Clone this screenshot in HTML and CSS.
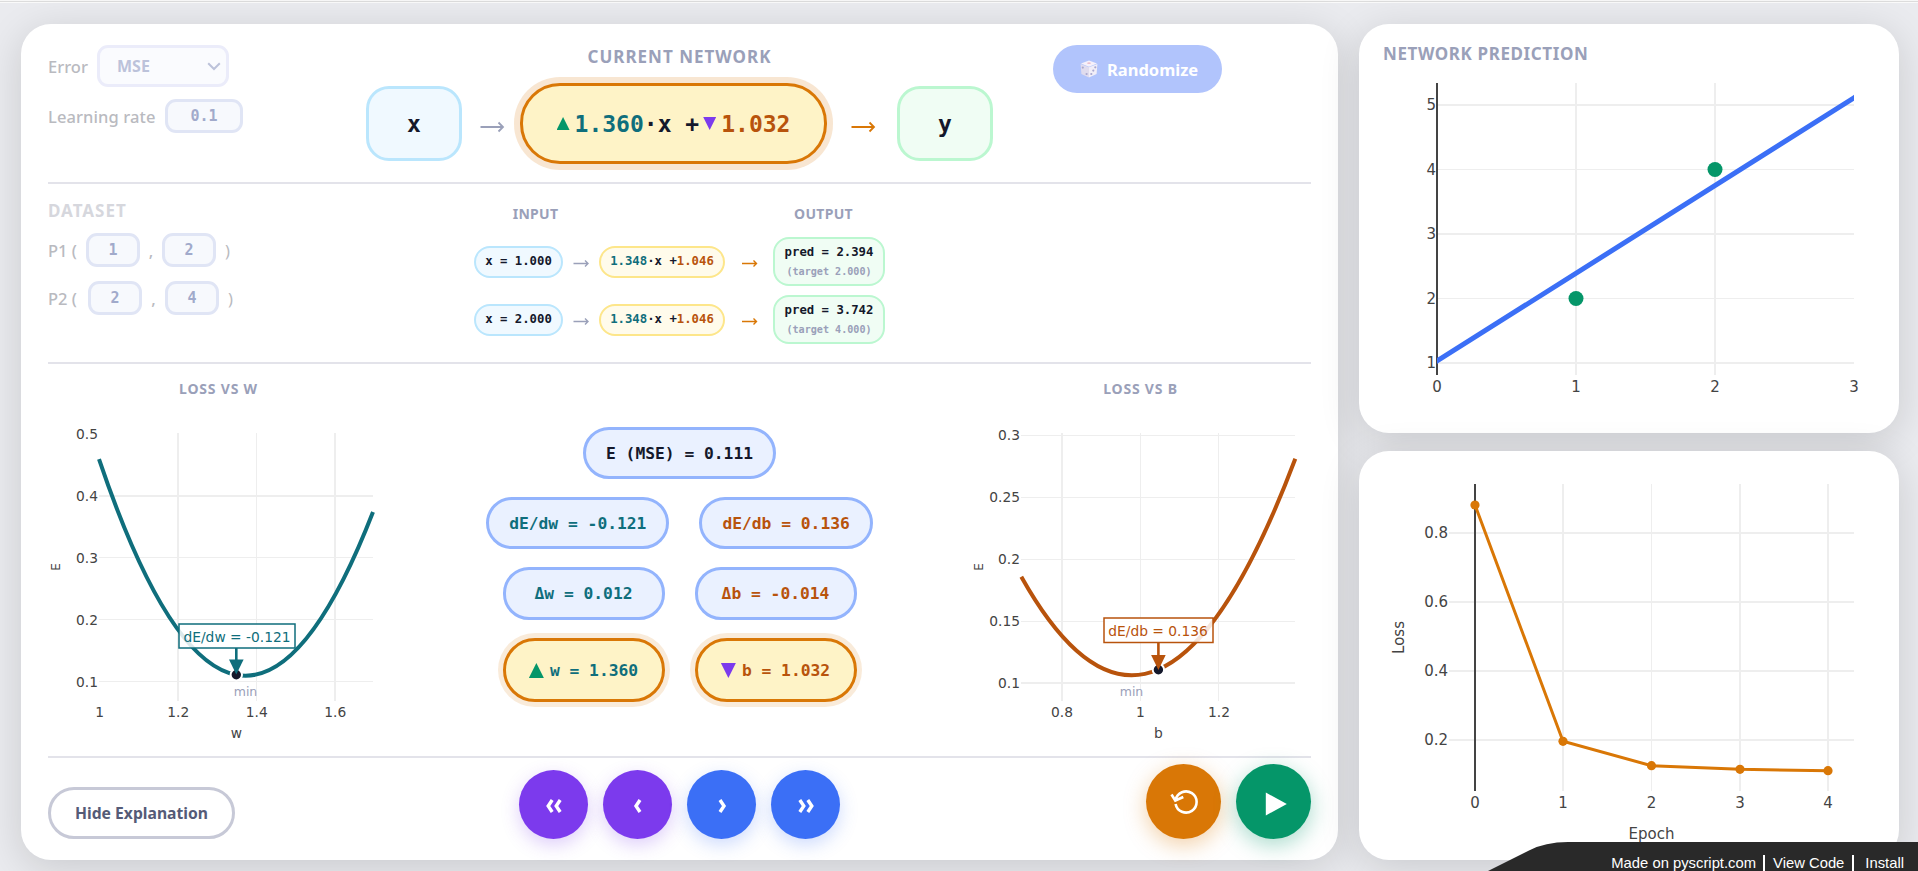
FILE: index.html
```
<!DOCTYPE html>
<html lang="en">
<head>
	<meta charset="UTF-8">
	<title>Network training</title>
	<link rel="stylesheet" href="styles.css">
</head>
<body>
	<div class="topbar"></div>
	<div class="app">
		<main class="card main">

			<section class="row network">
				<div class="settings">
					<div class="field">
						<span class="label label-error">Error</span>
						<div class="select">MSE
							<svg width="14" height="9" viewBox="0 0 14 9"><path d="M1.200 1.200 7 7l5.800-5.800" fill="none" stroke="currentColor" stroke-width="2"/></svg>
						</div>
					</div>
					<div class="field">
						<span class="label label-rate">Learning rate</span>
						<div class="input rate">0.1</div>
					</div>
				</div>
				<div class="current">
					<h2>Current network</h2>
					<div class="nodes">
						<div class="node in">x</div>
						<svg class="arrow" width="58" height="18" viewBox="0 0 58 18"><path d="M18.500 12h22M36.500 7.500 41 12l-4.500 4.500"/></svg>
						<div class="node neuron">
							<i class="up"></i><span class="w">1.360</span>·x +<i class="down"></i><span class="b">1.032</span>
						</div>
						<svg class="arrow hot" width="70" height="18" viewBox="0 0 70 18"><path d="M24.500 12h22M42.500 7.500 47 12l-4.500 4.500"/></svg>
						<div class="node out">y</div>
					</div>
				</div>
				<div class="side">
					<button class="randomize">
						<svg width="18" height="18" viewBox="0 0 18 18">
							<path d="M9 .5 17 3.500 9 6.800 1 3.500z" fill="#f6f1fa"/>
							<path d="M.6 4 9 7.200V17.600L1.400 14z" fill="#e0dcee"/>
							<path d="M17.400 4 9 7.200V17.600L16.600 14z" fill="#f1eef8"/>
							<ellipse cx="9" cy="3.200" rx="1.800" ry=".9" fill="#eabfce"/>
							<circle cx="2.800" cy="7.600" r="1.100" fill="#a9a8cf"/>
							<circle cx="6.600" cy="14" r="1.100" fill="#a9a8cf"/>
							<circle cx="15.300" cy="7.300" r="1.100" fill="#a9a8cf"/>
							<circle cx="13.300" cy="10.600" r="1.100" fill="#a9a8cf"/>
							<circle cx="11.300" cy="14" r="1.100" fill="#a9a8cf"/>
						</svg>
						<span>Randomize</span>
					</button>
				</div>
			</section>

			<section class="row data">
				<div class="dataset">
					<h2>Dataset</h2>
					<div class="point"><span class="p1">P1 (</span><div class="input">1</div><em>,</em><div class="input">2</div><b>)</b></div>
					<div class="point"><span class="p2">P2 (</span><div class="input">2</div><em class="wide">,</em><div class="input">4</div><b>)</b></div>
				</div>
				<div class="forward">
					<div class="heads"><h3>Input</h3><h3>Output</h3></div>
					<div class="pass">
						<div class="pill in">x = 1.000</div>
						<svg class="arrow" width="36" height="12" viewBox="0 0 36 12"><path d="M10.500 7.500h14.500M22 4.500l3 3-3 3"/></svg>
						<div class="pill neuron"><span class="w">1.348</span>·x +<span class="b">1.046</span></div>
						<svg class="arrow hot" width="48" height="12" viewBox="0 0 48 12"><path d="M17 7.500h14.500M28.500 4.500l3 3-3 3"/></svg>
						<div class="pill out">pred = 2.394<small>(target 2.000)</small></div>
					</div>
					<div class="pass">
						<div class="pill in">x = 2.000</div>
						<svg class="arrow" width="36" height="12" viewBox="0 0 36 12"><path d="M10.500 7.500h14.500M22 4.500l3 3-3 3"/></svg>
						<div class="pill neuron"><span class="w">1.348</span>·x +<span class="b">1.046</span></div>
						<svg class="arrow hot" width="48" height="12" viewBox="0 0 48 12"><path d="M17 7.500h14.500M28.500 4.500l3 3-3 3"/></svg>
						<div class="pill out">pred = 3.742<small>(target 4.000)</small></div>
					</div>
				</div>
				<div></div>
			</section>

			<section class="row loss">
				<div class="plot">
					<h3>Loss vs w</h3>
					<svg class="chart" width="341" height="340" viewBox="48 410 341 340">
						<g class="grid">
							<path d="M178 433V701M335 433V701M99 496H373" stroke-width="2"/>
							<path d="M256.500 433V701M99 557.500H373M99 619.500H373M99 681.500H373"/>
						</g>
						<path d="M99 459.200Q236 864 373 512" class="curve w"/>
						<g class="ticks y">
							<text x="98" y="439">0.5</text>
							<text x="98" y="501">0.4</text>
							<text x="98" y="562.500">0.3</text>
							<text x="98" y="624.500">0.2</text>
							<text x="98" y="686.500">0.1</text>
						</g>
						<g class="ticks">
							<text x="99.700" y="717">1</text>
							<text x="178.300" y="717">1.2</text>
							<text x="256.700" y="717">1.4</text>
							<text x="335.300" y="717">1.6</text>
							<text x="236.500" y="737.500">w</text>
							<text class="small" transform="translate(60 567) rotate(-90)">E</text>
						</g>
						<text x="245.500" y="696" class="min">min</text>
						<circle cx="236.300" cy="674.700" r="5.700" class="dot"/>
						<g class="note w">
							<path d="M236.300 648V662" stroke-width="2.600"/>
							<path d="M229 659.500h14.600l-7.300 15z" class="head"/>
							<rect x="179" y="624" width="116" height="24"/>
							<text x="237" y="641.800">dE/dw = -0.121</text>
						</g>
					</svg>
				</div>
				<div class="steps">
					<div class="line"><div class="calc">E (MSE) = 0.111</div></div>
					<div class="line"><div class="calc w">dE/dw = -0.121</div><div class="calc b">dE/db = 0.136</div></div>
					<div class="line"><div class="calc w fix">Δw = 0.012</div><div class="calc b fix">Δb = -0.014</div></div>
					<div class="line"><div class="calc w fix new"><i class="up"></i>w = 1.360</div><div class="calc b fix new"><i class="down"></i>b = 1.032</div></div>
				</div>
				<div class="plot">
					<h3>Loss vs b</h3>
					<svg class="chart" width="341" height="340" viewBox="970 410 341 340">
						<g class="grid">
							<path d="M1062 433V701M1021 683H1295" stroke-width="2"/>
							<path d="M1140.500 433V701M1218.500 433V701M1021 435.500H1295M1021 497.500H1295M1021 559.500H1295M1021 621.500H1295"/>
						</g>
						<path d="M1021.300 576.700Q1158.300 821.200 1295.300 458.800" class="curve b"/>
						<g class="ticks y">
							<text x="1020" y="440">0.3</text>
							<text x="1020" y="502">0.25</text>
							<text x="1020" y="564">0.2</text>
							<text x="1020" y="626">0.15</text>
							<text x="1020" y="688">0.1</text>
						</g>
						<g class="ticks">
							<text x="1062" y="717">0.8</text>
							<text x="1140.500" y="717">1</text>
							<text x="1219" y="717">1.2</text>
							<text x="1158.300" y="737.500">b</text>
							<text class="small" transform="translate(982.500 567) rotate(-90)">E</text>
						</g>
						<text x="1131.500" y="696" class="min">min</text>
						<circle cx="1158.400" cy="669.700" r="5.700" class="dot"/>
						<g class="note b">
							<path d="M1158.400 643V657" stroke-width="2.600"/>
							<path d="M1151.100 655h14.600l-7.300 15z" class="head"/>
							<rect x="1104" y="618" width="109" height="24.500"/>
							<text x="1158" y="635.800">dE/db = 0.136</text>
						</g>
					</svg>
				</div>
			</section>

			<section class="row controls">
				<div><button class="hide">Hide Explanation</button></div>
				<div class="group">
					<button class="round prev"><svg width="18" height="17" viewBox="0 0 18 17"><path d="M7.200 4 3.200 10l4 6M15.200 4 11.200 10l4 6"/></svg></button>
					<button class="round prev"><svg width="18" height="17" viewBox="0 0 18 17"><path d="M11 4 7 10l4 6"/></svg></button>
					<button class="round next"><svg width="18" height="17" viewBox="0 0 18 17"><path d="M7 4l4 6-4 6"/></svg></button>
					<button class="round next"><svg width="18" height="17" viewBox="0 0 18 17"><path d="M2.800 4l4 6-4 6M10.800 4l4 6-4 6"/></svg></button>
				</div>
				<div class="group end">
					<button class="round big reset"><svg width="28" height="26" viewBox="0 0 28 26"><path d="M5.600 15A10.600 10.600 0 1 0 5.600 11M1.500 5.500 5.300 11.500 13.300 8"/></svg></button>
					<button class="round big play"><svg width="30" height="30" viewBox="0 0 30 30"><path d="M6.800 5.500v23L27.800 17z"/></svg></button>
				</div>
			</section>
		</main>

		<aside class="right">
			<div class="card">
				<h2>Network prediction</h2>
				<svg class="chart big" width="540" height="345" viewBox="1359 71 540 345">
					<g class="grid">
						<path d="M1576 83V375M1715 83V375M1437 105H1854M1437 234H1854M1437 363H1854" stroke-width="2"/>
						<path d="M1437 169.500H1854M1437 298.500H1854"/>
					</g>
					<path d="M1437 83V375" class="axis"/>
					<clipPath id="area"><path d="M1437 83h417v292h-417z"/></clipPath>
					<path d="M1430 365.500 1437 361 1854 97.800 1860 94" class="pred" clip-path="url(#area)"/>
					<circle cx="1576" cy="298.500" r="7.500" class="sample"/>
					<circle cx="1715" cy="169.500" r="7.500" class="sample"/>
					<g class="ticks y">
						<text x="1436" y="110">5</text>
						<text x="1436" y="174.500">4</text>
						<text x="1436" y="239">3</text>
						<text x="1436" y="303.500">2</text>
						<text x="1436" y="368">1</text>
					</g>
					<g class="ticks">
						<text x="1437" y="392">0</text>
						<text x="1576" y="392">1</text>
						<text x="1715" y="392">2</text>
						<text x="1854" y="392">3</text>
					</g>
				</svg>
			</div>
			<div class="card">
				<svg class="chart big" width="540" height="409" viewBox="1359 451 540 409">
					<g class="grid">
						<path d="M1563 484V791M1740 484V791M1828 484V791M1449 533H1854M1449 602H1854M1449 671H1854M1449 740H1854" stroke-width="2"/>
						<path d="M1651.500 484V791"/>
					</g>
					<path d="M1475 484V791" class="axis"/>
					<path d="M1475 505 1563 741.300 1651.500 765.700 1740 769.300 1828 770.700" class="history"/>
					<g class="epoch">
						<circle cx="1475" cy="505" r="4.600"/>
						<circle cx="1563" cy="741.300" r="4.600"/>
						<circle cx="1651.500" cy="765.700" r="4.600"/>
						<circle cx="1740" cy="769.300" r="4.600"/>
						<circle cx="1828" cy="770.700" r="4.600"/>
					</g>
					<g class="ticks y">
						<text x="1448" y="538">0.8</text>
						<text x="1448" y="607">0.6</text>
						<text x="1448" y="676">0.4</text>
						<text x="1448" y="745">0.2</text>
					</g>
					<g class="ticks">
						<text x="1475" y="808">0</text>
						<text x="1563" y="808">1</text>
						<text x="1651.500" y="808">2</text>
						<text x="1740" y="808">3</text>
						<text x="1828" y="808">4</text>
						<text x="1651.500" y="838.500">Epoch</text>
						<text transform="translate(1404 637.500) rotate(-90)">Loss</text>
					</g>
				</svg>
			</div>
		</aside>
	</div>

	<div class="badge">
		<svg width="430" height="29" viewBox="0 0 430 29"><path d="M0 29 41 8.500Q57 0 80 0H430V29z" fill="#292929"/></svg>
		<div class="links"><span>Made on pyscript.com</span><span class="code">View Code</span><span class="install">Install</span></div>
	</div>
</body>
</html>
```
FILE: styles.css
```
*{margin: 0;padding: 0;box-sizing: border-box;}
body{
	height: 871px;
	overflow: hidden;
	background: #eaebef;
	font-family: "Noto Sans", "Open Sans", sans-serif;
	color: #14182b;
}
button{
	border: none;
	font-family: inherit;
}
.topbar{
	height: 3px;
	background: #f7f7f7;
	border-bottom: 1px solid #fafafa;
	box-shadow: inset 0 -1px 0 #dcdcdc;
}
.app{
	display: grid;
	grid-template-columns: 1317px 540px;
	gap: 21px;
	height: 868px;
	padding: 21px 19px 11px 21px;
}
.card{
	background: #fff;
	border-radius: 30px;
	box-shadow: 0 8px 40px rgba(0, 0, 0, .14);
}
.right{
	display: grid;
	grid-template-rows: 409px 409px;
	gap: 18px;
}
h2{
	font-size: 17px;
	line-height: 22px;
	font-weight: 700;
	letter-spacing: 1px;
	text-transform: uppercase;
	color: #9aa0b9;
}
h3{
	font-size: 14px;
	line-height: 20px;
	font-weight: 700;
	letter-spacing: .3px;
	text-transform: uppercase;
	text-align: center;
	color: #9aa0b9;
}
.right h2{
	padding: 19px 24px 6px;
	letter-spacing: .6px;
}

/* main card */
.main{
	padding: 0 27px;
}
.row{
	display: grid;
	grid-template-columns: 1fr auto 1fr;
	border-bottom: 2px solid #e3e3ea;
}
.network{height: 160px;}
.data{height: 180px;}
.loss{
	height: 394px;
	grid-template-columns: 341px 1fr 341px;
}
.controls{
	border: none;
	height: 81px;
	align-items: end;
}
.w{color: #0f6e7c;}
.b{color: #b8530c;}
.up, .down{
	display: inline-block;
	width: 13px;
	height: 13px;
	background: #059669;
	clip-path: polygon(50% 0, 100% 100%, 0 100%);
}
.down{
	background: #7c3aed;
	clip-path: polygon(0 0, 100% 0, 50% 100%);
}
.arrow{
	fill: none;
	stroke: #9aa0b9;
	stroke-width: 1.800;
}
.pass .arrow{stroke-width: 1.400;}
.arrow.hot{stroke: #d97706;}

/* settings */
.settings{
	padding-top: 21px;
}
.field{
	display: flex;
	align-items: center;
	margin-bottom: 12px;
}
.label, .point{
	font-size: 16.500px;
	font-weight: 500;
	color: #b9bac0;
}
.label-error{width: 49px;}
.label-rate{
	width: 117px;
	letter-spacing: .1px;
}
.select{
	display: flex;
	align-items: center;
	justify-content: space-between;
	width: 132px;
	height: 42px;
	padding: 0 5px 0 17px;
	border: 3px solid #ebecfa;
	border-radius: 11px;
	background: #fafbfe;
	font-size: 16px;
	font-weight: 700;
	color: #bcc2da;
}
.input{
	width: 54px;
	height: 34px;
	border: 3px solid #e0e5f5;
	border-radius: 11px;
	background: #f7f9fd;
	font: 700 15px/29px "DejaVu Sans Mono", monospace;
	text-align: center;
	color: #a1aacb;
}
.rate{width: 78px;}

/* network */
.current h2{
	margin-top: 22px;
	text-align: center;
}
.nodes{
	display: flex;
	align-items: center;
	height: 81px;
	margin-top: 15px;
}
.node{
	display: flex;
	align-items: center;
	justify-content: center;
	width: 96px;
	height: 75px;
	border: 3px solid #bae6fd;
	border-radius: 23px;
	background: #f0f9ff;
	font: 700 23px/28px "DejaVu Sans Mono", monospace;
	white-space: pre;
}
.node.out{
	border-color: #bbf7d0;
	background: #f0fdf4;
}
.node.neuron{
	width: 307px;
	height: 81px;
	border-color: #d97706;
	border-radius: 40px;
	background: #fef3c7;
	box-shadow: 0 0 0 6px rgba(217, 119, 6, .18);
}
.node .up{margin-right: 5px;}
.node .down{margin: 0 5px 0 4px;}
.randomize{
	display: flex;
	align-items: center;
	width: 169px;
	height: 48px;
	margin: 21px 0 0 60px;
	padding-left: 27px;
	gap: 9px;
	border-radius: 24px;
	background: #b1c4fc;
	font-size: 16.500px;
	font-weight: 700;
	color: #fff;
}

/* dataset and forward pass */
.dataset h2{
	margin: 16px 0 11px;
	color: #d6d7dd;
}
.point{
	display: flex;
	align-items: center;
	height: 34px;
	margin-bottom: 14px;
}
.point b{
	margin-left: 9px;
	font-weight: 400;
}
.point em{
	width: 22px;
	text-align: center;
	font-style: normal;
}
.point .wide{width: 23px;}
.p1{width: 38px;}
.p2{width: 40px;}
.forward{
	display: flex;
	flex-direction: column;
	align-items: center;
}
.heads{
	display: grid;
	grid-template-columns: 288px 288px;
	margin: 20px 0 13px;
}
.pass{
	display: flex;
	align-items: center;
	height: 49px;
	margin-bottom: 9px;
}
.pill{
	width: 89px;
	height: 32px;
	border: 2px solid #bae6fd;
	border-radius: 16px;
	background: #f0f9ff;
	font: 700 12.300px/26px "DejaVu Sans Mono", monospace;
	text-align: center;
	white-space: nowrap;
}
.pill.neuron{
	width: 126px;
	border-color: #fde68a;
	background: #fffbeb;
}
.pill.out{
	width: 112px;
	height: 49px;
	border-color: #bbf7d0;
	background: #f0fdf4;
	padding-top: 4px;
	line-height: 19px;
}
.pill small{
	display: block;
	font-size: 10.100px;
	color: #9aa0b9;
}

/* loss */
.plot h3{
	margin-top: 15px;
	letter-spacing: .8px;
}
.chart{
	display: block;
	margin-top: 11px;
	font-family: "DejaVu Sans", Verdana, sans-serif;
	font-size: 13.800px;
	text-anchor: middle;
}
.right .chart{margin-top: 0;}
.chart.big{font-size: 15px;}
.grid{
	fill: none;
	stroke: #eee;
	stroke-width: 1;
}
.ticks{fill: #444;}
.ticks.y{text-anchor: end;}
.small{font-size: 12px;}
.min{
	font-size: 12.500px;
	fill: #9aa0b9;
}
.axis{
	stroke: #444;
	stroke-width: 2;
}
.curve{
	fill: none;
	stroke: currentColor;
	stroke-width: 4;
}
.dot{
	fill: #14182b;
	stroke: #fff;
	stroke-width: 2;
}
.note{
	fill: currentColor;
	stroke: currentColor;
}
.note .head, .note text{stroke: none;}
.note rect{
	fill: #fff;
	fill-opacity: .85;
	stroke-width: 1.500;
}
.pred{
	fill: none;
	stroke: #3b6ff6;
	stroke-width: 5;
}
.sample{fill: #059669;}
.history{
	fill: none;
	stroke: #d97706;
	stroke-width: 3;
}
.epoch{fill: #d97706;}

.steps{
	display: flex;
	flex-direction: column;
	align-items: center;
	gap: 18px;
	padding-top: 63px;
}
.line{
	display: flex;
	gap: 30px;
}
.calc{
	display: flex;
	align-items: center;
	justify-content: center;
	height: 52px;
	padding: 1px 20px 0;
	border: 3px solid #93b4fd;
	border-radius: 26px;
	background: #eaf1ff;
	font: 700 16.300px/22px "DejaVu Sans Mono", monospace;
	white-space: pre;
}
.fix{
	width: 162px;
	height: 53px;
	padding: 1px 0 0;
}
.fix.new{
	height: 64px;
	border-color: #d97706;
	border-radius: 32px;
	background: #fef3c7;
	box-shadow: 0 0 0 5px rgba(217, 119, 6, .15);
}
.new i{
	width: 15px;
	height: 15px;
	margin-right: 6px;
}

/* controls */
.hide{
	width: 187px;
	height: 52px;
	border: 3px solid #c7c9d7;
	border-radius: 26px;
	background: #fff;
	font-size: 15.700px;
	font-weight: 700;
	color: #555b77;
}
.group{
	display: flex;
	gap: 15px;
}
.end{justify-content: flex-end;}
.round{
	display: flex;
	align-items: center;
	justify-content: center;
	width: 69px;
	height: 69px;
	border-radius: 50%;
}
.round svg{
	fill: none;
	stroke: #fff;
	stroke-width: 3.400;
}
.prev{
	background: #7c3aed;
	box-shadow: 0 6px 18px rgba(124, 58, 237, .25);
}
.next{
	background: #3b6ff6;
	box-shadow: 0 6px 18px rgba(59, 111, 246, .25);
}
.big.round{
	width: 75px;
	height: 75px;
}
.reset{
	background: #d97706;
	box-shadow: 0 6px 22px rgba(217, 119, 6, .35);
}
.reset svg{stroke-width: 2.600;}
.play{
	background: #059669;
	box-shadow: 0 6px 22px rgba(5, 150, 105, .35);
}
.play svg{
	fill: #fff;
	stroke: none;
}

/* corner badge lies over the page */
.badge{
	position: absolute;
	right: 0;
	bottom: 0;
	width: 430px;
	height: 29px;
}
.badge svg{
	position: absolute;
	left: 0;
	top: 0;
}
.links{
	position: relative;
	display: flex;
	justify-content: flex-end;
	padding: 13px 14px 0 0;
	font: 14.800px/17px "Liberation Sans", Arial, sans-serif;
	color: #fff;
}
.code{
	margin-left: 7px;
	padding: 0 8px;
	border-left: 2px solid #fff;
	border-right: 2px solid #fff;
}
.install{padding-left: 11px;}
```
